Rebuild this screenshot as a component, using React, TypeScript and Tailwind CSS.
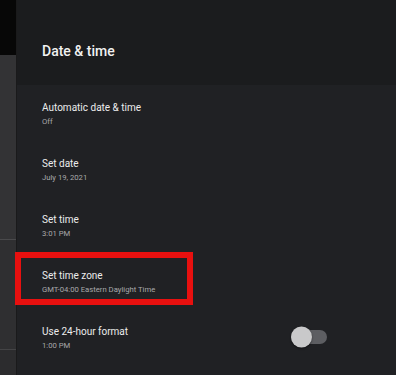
import React from 'react';

const rows = [
  { title: 'Automatic date & time', sub: 'Off' },
  { title: 'Set date', sub: 'July 19, 2021' },
  { title: 'Set time', sub: '3:01 PM' },
  { title: 'Set time zone', sub: 'GMT-04:00 Eastern Daylight Time' },
  { title: 'Use 24-hour format', sub: '1:00 PM', toggle: true },
];

function Toggle() {
  return (
    <div className="relative w-[36px] h-[14px] rounded-full bg-[#5d5e62]">
      <div className="absolute left-0 top-1/2 -translate-y-1/2 w-[21px] h-[21px] rounded-full bg-[#c9c9ca] shadow-[0_1px_2px_rgba(0,0,0,0.5)]" />
    </div>
  );
}

export default function App() {
  return (
    <div
      className="relative flex w-[396px] h-[375px] overflow-hidden bg-[#202124]"
      style={{ fontFamily: 'Roboto, "Noto Sans", sans-serif' }}
    >
      {/* Left strip: the previous menu peeking in */}
      <div className="flex flex-col w-[17px] shrink-0 border-r border-[#1a1a1b]">
        <div className="h-[55px] bg-[#070707]" />
        <div className="h-[185px] bg-[#333335] border-b border-[#4a4a4c]" />
        <div className="h-[110px] bg-[#2f2f31] border-b border-[#444446]" />
        <div className="flex-1 bg-[#2c2c2e]" />
      </div>

      {/* Settings panel */}
      <div className="flex flex-col flex-1">
        <div className="h-[85px] pl-[25px] pt-[41px] bg-[#1b1c1e]">
          <h1 className="text-[14px] leading-[20px] font-medium text-[#f1f1f1]">Date &amp; time</h1>
        </div>
        <div className="flex flex-col">
          {rows.map((r) => (
            <div key={r.title} className="h-[56px] flex items-center justify-between pl-[25px] pr-[69px]">
              <div className="flex flex-col pt-[1px]">
                <span className="text-[10px] leading-[15px] text-[#ececec]">{r.title}</span>
                <span className="text-[7.7px] leading-[13px] text-[#a8a9ab]">{r.sub}</span>
              </div>
              {r.toggle && <Toggle />}
            </div>
          ))}
        </div>
      </div>

      {/* Red highlight box around "Set time zone" */}
      <div className="absolute left-[15px] top-[252px] w-[178px] h-[53px] border-[6px] border-[#e8100f]" />
    </div>
  );
}
